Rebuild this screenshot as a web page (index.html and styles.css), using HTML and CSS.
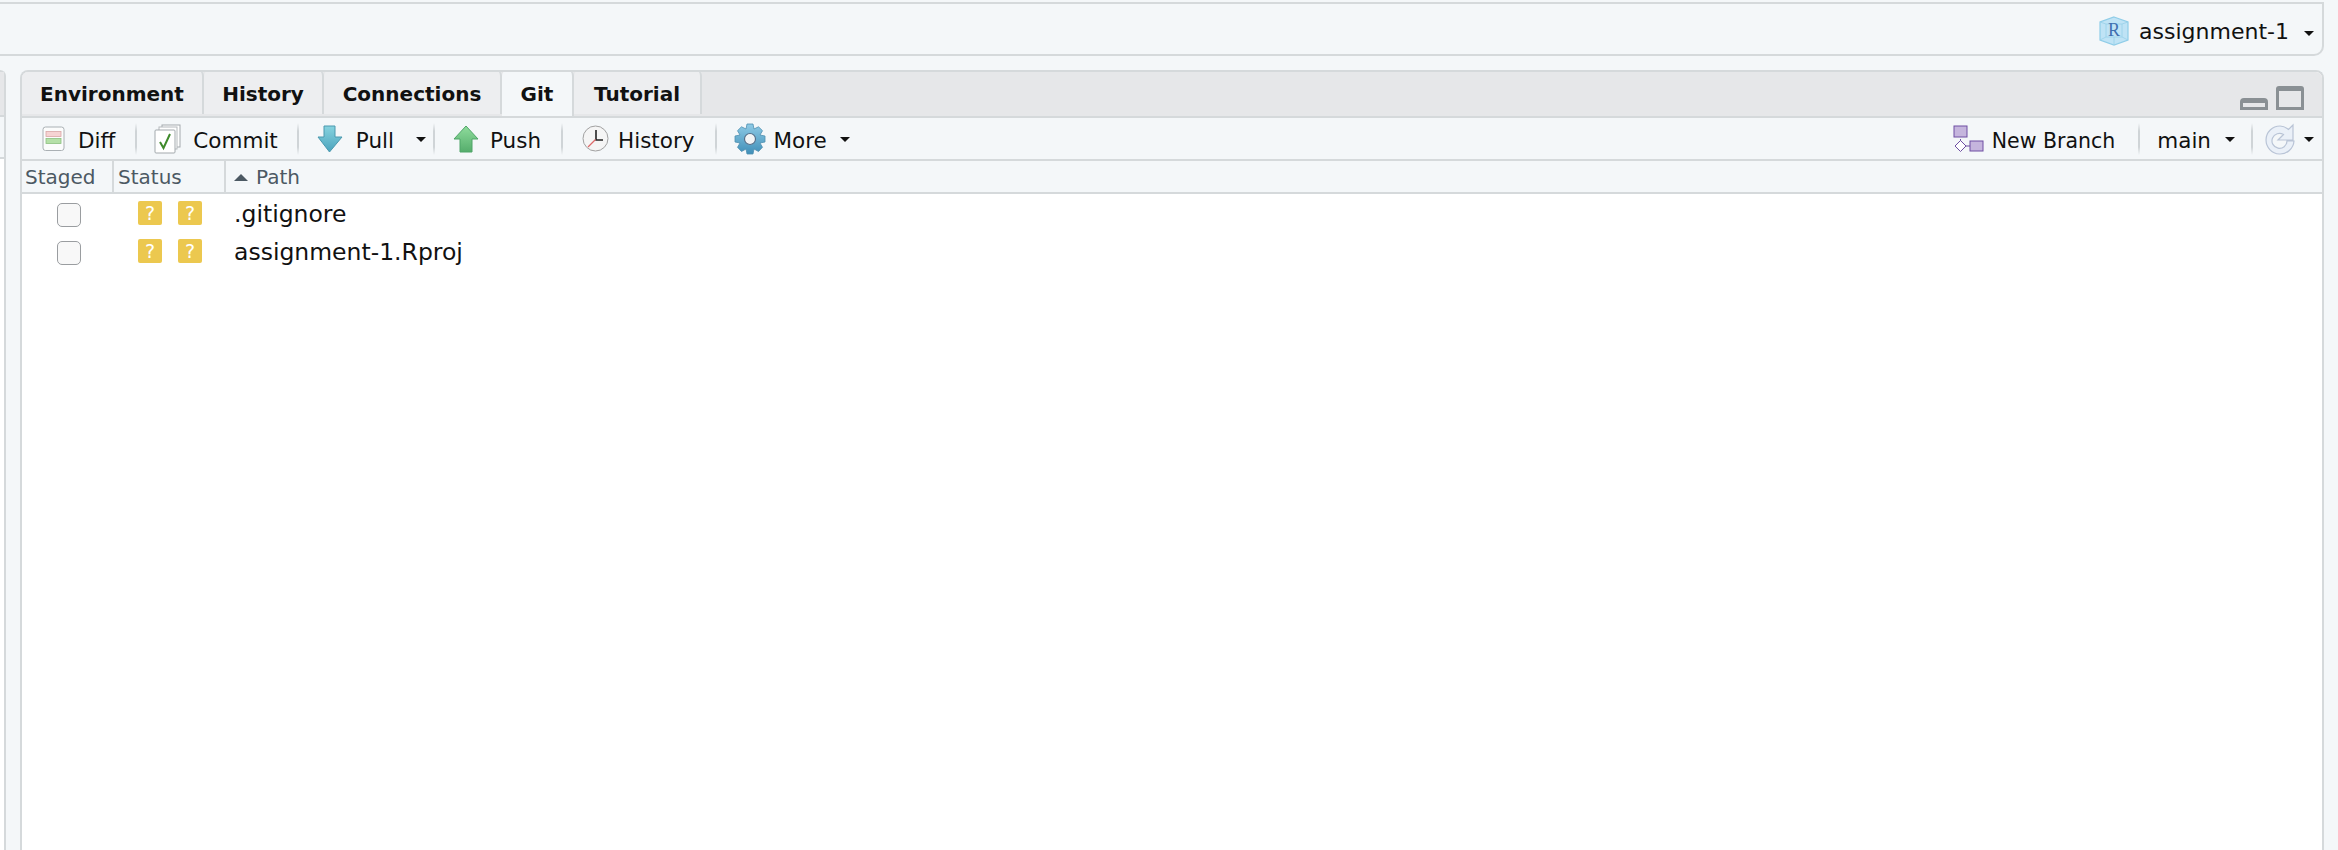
FILE: index.html
```html
<!DOCTYPE html>
<html lang="en">
<head>
<meta charset="utf-8">
<title>Git pane</title>
<link rel="stylesheet" href="styles.css">
</head>
<body>
<svg class="defs" width="0" height="0" aria-hidden="true">
  <defs>
    <linearGradient id="blueArrow" x1="0" y1="0" x2="0" y2="1"><stop offset="0" stop-color="#86d3df"/><stop offset="1" stop-color="#4ba3bd"/></linearGradient>
    <linearGradient id="greenArrow" x1="0" y1="0" x2="0" y2="1"><stop offset="0" stop-color="#8fdc9c"/><stop offset="1" stop-color="#55ad6c"/></linearGradient>
    <linearGradient id="gearFill" x1="0" y1="0" x2="0" y2="1"><stop offset="0" stop-color="#8fcbe6"/><stop offset="1" stop-color="#3f8fb8"/></linearGradient>
  </defs>
</svg>
<header class="topbar">
  <svg class="project-icon" width="30" height="30" viewBox="0 0 30 30">
    <path d="M15 1 L29 6 V24 L15 29 L1 24 V6 Z" fill="#bfe3f5" stroke="#8fcde8" stroke-width="1.200"/>
    <path d="M1 6 L7 8 H23 L29 6 M7 8 V21 L1 24 M23 8 V21 L29 24 M7 21 H23 M15 21 V29" fill="none" stroke="#98d0e8" stroke-width=".8"/>
    <text x="15" y="20" text-anchor="middle" class="project-r">R</text>
  </svg>
  <span class="project-name">assignment-1</span>
  <span class="caret caret-project"></span>
</header>
<main class="workspace">
  <div class="left-sliver">
    <div class="sliver-tabs"></div>
    <div class="sliver-bar"></div>
    <div class="sliver-body"></div>
  </div>
  <section class="pane">
    <div class="tabstrip">
      <nav class="tabs">
        <span class="tab tab-env">Environment</span>
        <span class="tab tab-hist">History</span>
        <span class="tab tab-conn">Connections</span>
        <span class="tab tab-git">Git</span>
        <span class="tab tab-tut">Tutorial</span>
      </nav>
      <div class="window-controls">
        <span class="win-min"></span>
        <span class="win-max"></span>
      </div>
    </div>
    <div class="toolbar">
      <div class="tool tool-diff">
        <svg width="24" height="26" viewBox="0 0 24 26">
          <rect x="1" y="1" width="21" height="23.500" rx="2.500" fill="#fbfcfc" stroke="#aab0b4"/>
          <rect x="4" y="5.500" width="15" height="5" fill="#f6d3d3" stroke="#d9a6a6" stroke-width=".8"/>
          <rect x="4" y="12.500" width="15" height="5" fill="#b5e0a8" stroke="#8cc080" stroke-width=".8"/>
        </svg>
        <span>Diff</span>
      </div>
      <i class="sep sep-1"></i>
      <div class="tool tool-commit">
        <svg width="28" height="30" viewBox="0 0 28 30">
          <rect x="8" y="1" width="18" height="22" fill="#fff" stroke="#a3a9ad"/>
          <rect x="5" y="3" width="18" height="22" fill="#fff" stroke="#b5babd"/>
          <rect x="1" y="6" width="20" height="23" rx="1" fill="#fff" stroke="#a3a9ad"/>
          <path d="M6 18 L9.500 24 L16 10" fill="none" stroke="#3f8a2b" stroke-width="2"/>
        </svg>
        <span>Commit</span>
      </div>
      <i class="sep sep-2"></i>
      <div class="tool tool-pull">
        <svg width="26" height="28" viewBox="0 0 26 28">
          <path d="M7 1 H18 V12 H25 L12.500 27 L1 12 H7 Z" fill="url(#blueArrow)" stroke="#4a98ae" stroke-width="1"/>
        </svg>
        <span>Pull</span>
        <b class="caret caret-pull"></b>
      </div>
      <i class="sep sep-3"></i>
      <div class="tool tool-push">
        <svg width="26" height="28" viewBox="0 0 26 28">
          <path d="M13 1 L25 14 H19 V27 H7 V14 H1 Z" fill="url(#greenArrow)" stroke="#4fa568" stroke-width="1"/>
        </svg>
        <span>Push</span>
      </div>
      <i class="sep sep-4"></i>
      <div class="tool tool-history">
        <svg width="27" height="27" viewBox="0 0 27 27">
          <circle cx="13.500" cy="13.500" r="12.500" fill="#f5f5f5" stroke="#a0a0a0" stroke-width="1"/>
          <path d="M14 5 V15 H21" fill="none" stroke="#222" stroke-width="1.600"/>
          <path d="M13.500 14.500 L6 22" stroke="#dd6a6a" stroke-width="1.200"/>
        </svg>
        <span>History</span>
      </div>
      <i class="sep sep-5"></i>
      <div class="tool tool-more">
        <svg width="32" height="32" viewBox="0 0 32 32">
          <path d="M13 1 H19 L20 6 L24.500 3.800 L28.500 7.700 L26 12 L31 13 V19 L26 20 L28.500 24.300 L24.500 28.500 L20 26 L19 31 H13 L12 26 L7.500 28.500 L3.500 24.300 L6 20 L1 19 V13 L6 12 L3.500 7.700 L7.500 3.800 L12 6 Z" fill="url(#gearFill)" stroke="#4f8fb0" stroke-width=".8"/>
          <circle cx="16" cy="16" r="5.500" fill="#f2f4f5" stroke="#56708a" stroke-width="1.200"/>
        </svg>
        <span>More</span>
        <b class="caret caret-more"></b>
      </div>
      <div class="tool tool-branch">
        <svg width="31" height="27" viewBox="0 0 31 27">
          <path d="M7.500 14 V20 M13 21 H17" stroke="#6e4fa3" stroke-width="1"/>
          <rect x="1" y="1" width="13" height="11" fill="#c5b5dd" stroke="#6e4fa3"/>
          <rect x="17" y="16" width="13" height="10" fill="#c5b5dd" stroke="#6e4fa3"/>
          <path d="M7.500 15.500 L13 21 L7.500 26.500 L2 21 Z" fill="#fff" stroke="#6e4fa3"/>
        </svg>
        <span>New Branch</span>
      </div>
      <i class="sep sep-6"></i>
      <div class="tool tool-main">
        <span>main</span>
        <b class="caret caret-main"></b>
      </div>
      <i class="sep sep-7"></i>
      <div class="tool tool-refresh">
        <svg width="30" height="32" viewBox="0 0 30 32">
          <path d="M28 2 V17 H13 L18.500 11.500 A7.500 7.500 0 1 0 22 18 H29 A14 14 0 1 1 15 3 C18 3 21 4.500 23.500 6.500 Z" fill="#eaf0f8" stroke="#b9c4d6" stroke-width="1.200"/>
        </svg>
        <b class="caret caret-refresh"></b>
      </div>
    </div>
    <div class="columns">
      <span class="col col-staged">Staged</span>
      <span class="col col-status">Status</span>
      <span class="col col-path"><i class="sort-up"></i>Path</span>
    </div>
    <ul class="files">
      <li class="file">
        <span class="check"></span>
        <span class="badge badge-first">?</span>
        <span class="badge">?</span>
        <span class="name">.gitignore</span>
      </li>
      <li class="file">
        <span class="check"></span>
        <span class="badge badge-first">?</span>
        <span class="badge">?</span>
        <span class="name">assignment-1.Rproj</span>
      </li>
    </ul>
  </section>
</main>
</body>
</html>
```
FILE: styles.css
```css
* { box-sizing: border-box; }
html, body { height: 100%; }
body {
  margin: 0;
  height: 850px;
  overflow: hidden;
  background: #f4f7f9;
  font-family: "DejaVu Sans", sans-serif;
  color: #111;
  display: flex;
  flex-direction: column;
}
.defs { position: absolute; }

.topbar {
  margin-top: 2px;
  margin-right: 14px;
  height: 54px;
  border: 2px solid #d5d9db;
  border-left: 0;
  border-radius: 0 0 10px 0;
  display: flex;
  align-items: center;
  justify-content: flex-end;
  padding-right: 8px;
}
.project-icon { margin-right: 10px; margin-top: 4px; }
.project-r { font: 18px "Liberation Serif", serif; fill: #3f6fb0; }
.project-name { font-size: 22px; line-height: 30px; padding-top: 6px; }

.caret {
  display: inline-block;
  width: 0;
  height: 0;
  border-left: 5.500px solid transparent;
  border-right: 5.500px solid transparent;
  border-top: 5.500px solid #111;
}
.caret-project { margin-left: 15px; margin-top: 8px; }

.workspace {
  flex: 1;
  display: flex;
  margin-top: 14px;
  min-height: 0;
}
.left-sliver {
  width: 6px;
  margin-right: 14px;
  border: 2px solid #d5d9db;
  border-width: 2px 2px 0 0;
  border-radius: 0 8px 0 0;
  display: flex;
  flex-direction: column;
}
.sliver-tabs { height: 45px; background: #e6e7e9; border-bottom: 2px solid #d5d9db; }
.sliver-bar { height: 42px; border-bottom: 2px solid #d5d9db; }
.sliver-body { flex: 1; background: #fff; }

.pane {
  flex: 1;
  margin-right: 14px;
  border: 2px solid #d5d9db;
  border-bottom: 0;
  border-radius: 8px 8px 0 0;
  background: #fff;
  display: flex;
  flex-direction: column;
  overflow: hidden;
}

.tabstrip {
  height: 46px;
  background: #e6e7e9;
  border-bottom: 2px solid #d5d9db;
  display: flex;
  justify-content: space-between;
  align-items: flex-end;
}
.tabs { display: flex; height: 46px; }
.tab {
  height: 44px;
  background: #edeef0;
  border-right: 2px solid #d5d9db;
  border-radius: 6px 6px 0 0;
  font-weight: 700;
  font-size: 20px;
  line-height: 48px;
  text-align: center;
}
.tab-env { width: 182px; }
.tab-hist { width: 120px; }
.tab-conn { width: 178px; }
.tab-git { width: 72px; height: 46px; background: #f4f7f9; }
.tab-tut { width: 128px; }

.window-controls {
  display: flex;
  align-items: flex-end;
  gap: 8px;
  margin-right: 18px;
  margin-bottom: 6px;
}
.win-min {
  width: 28px;
  height: 12px;
  border: 3px solid #8a9094;
  border-top-width: 5px;
  border-radius: 4px 4px 0 0;
}
.win-max {
  width: 28px;
  height: 24px;
  border: 3px solid #8a9094;
  border-top-width: 5px;
  border-radius: 3px 3px 0 0;
}

.toolbar {
  height: 43px;
  background: #f4f7f9;
  border-bottom: 2px solid #d5d9db;
  display: flex;
  align-items: center;
  font-size: 21.500px;
  padding-left: 20px;
  padding-right: 8px;
}
.tool { display: flex; align-items: center; white-space: nowrap; }
.tool svg { display: block; }
.tool span { line-height: 30px; padding-top: 4px; }
.sep {
  width: 2px;
  height: 32px;
  background: linear-gradient(#f4f7f9, #cfd4d7 25%, #cfd4d7 75%, #f4f7f9);
}
.tool-diff svg { margin-right: 12px; }
.tool-commit svg { margin-right: 11px; }
.tool-pull svg { margin-right: 13px; }
.tool-push svg { margin-right: 11px; }
.tool-history svg { margin-right: 9px; }
.tool-more svg { margin-right: 8px; }
.tool-branch svg { margin-right: 8px; }
.tool-branch span { font-size: 20.500px; }
.sep-1 { margin: 0 17px 0 20px; }
.sep-2 { margin: 0 18px 0 19px; }
.sep-3 { margin: 0 18px 0 7px; }
.sep-4 { margin: 0 19px 0 20px; }
.sep-5 { margin: 0 17px 0 20px; }
.tool-branch { margin-left: auto; }
.sep-6 { margin: 0 17px 0 23px; }
.sep-7 { margin: 0 12px 0 16px; }
.caret-pull { margin-left: 22px; margin-top: 2px; }
.caret-more { margin-left: 13px; margin-top: 2px; }
.caret-main { margin-left: 14px; margin-top: 2px; }
.caret-refresh { margin-left: 9px; margin-top: 2px; }

.columns {
  height: 33px;
  background: #f4f7f9;
  border-bottom: 2px solid #d5d9db;
  display: flex;
  color: #4c5963;
  font-size: 20px;
  line-height: 29px;
}
.col { border-right: 2px solid #d5d9db; padding: 2px 0 0 3px; height: 31px; }
.col-staged { width: 92px; }
.col-status { width: 112px; padding-left: 4px; }
.col-path { flex: 1; border-right: 0; padding-left: 8px; display: flex; align-items: center; }
.sort-up {
  width: 0;
  height: 0;
  margin-right: 8px;
  border-left: 7px solid transparent;
  border-right: 7px solid transparent;
  border-bottom: 7px solid #4c5963;
}

.files { list-style: none; margin: 0; padding: 7px 0 0; }
.file {
  height: 38px;
  display: flex;
  align-items: flex-start;
  font-size: 23.500px;
}
.check {
  width: 24px;
  height: 24px;
  margin: 2px 0 0 35px;
  background: #f8f8f8;
  border: 1.500px solid #9a9da0;
  border-radius: 5px;
}
.badge {
  width: 24px;
  height: 24px;
  margin-left: 16px;
  background: #ecc84f;
  border-radius: 2px;
  color: #fff;
  font-size: 19px;
  line-height: 24px;
  text-align: center;
}
.badge-first { margin-left: 57px; }
.name { margin-left: 32px; line-height: 26px; }
```
